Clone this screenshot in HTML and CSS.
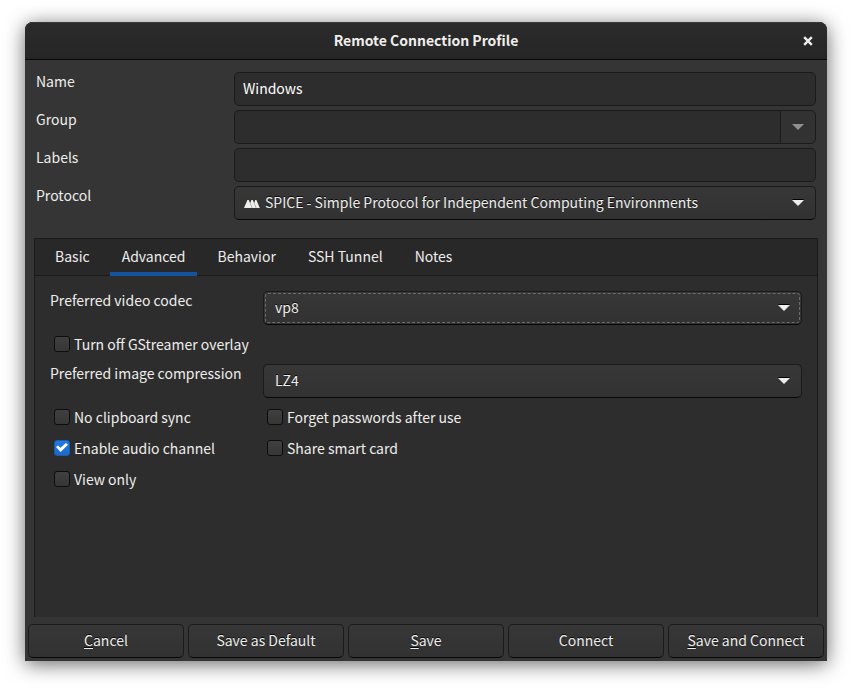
FILE: index.html
```html
<!DOCTYPE html>
<html lang="en">

<head>
    <meta charset="UTF-8">
    <meta name="viewport" content="width=device-width, initial-scale=1.0">
    <title>Remote Connection Profile</title>
    <link rel="stylesheet" href="styles.css">
</head>

<body>
    <main class="window">
        <header class="titlebar">
            <h1>Remote Connection Profile</h1>
            <button class="close" type="button" aria-label="Close">
                <svg width="10" height="10" viewBox="0 0 10 10">
                    <path d="M1.2 1.2 8.8 8.8M8.8 1.2 1.2 8.8" stroke="currentColor" stroke-width="2.4" />
                </svg>
            </button>
        </header>

        <form class="profile">
            <label for="name">Name</label>
            <input class="entry" id="name" type="text" value="Windows">

            <label for="group">Group</label>
            <div class="combo">
                <input class="entry" id="group" type="text">
                <button class="drop" type="button" aria-label="Show groups">
                    <svg width="12" height="6" viewBox="0 0 12 6"><path d="M0 0h12L6 6z" fill="currentColor" /></svg>
                </button>
            </div>

            <label for="labels">Labels</label>
            <input class="entry" id="labels" type="text">

            <label for="protocol">Protocol</label>
            <div class="select with-icon">
                <select id="protocol">
                    <option>SPICE - Simple Protocol for Independent Computing Environments</option>
                </select>
                <svg class="icon" width="16" height="8" viewBox="0 0 16 8" fill="currentColor">
                    <path d="M0 8 3.4 0H4.8L8 8zM6.2 3 7.4 0H8.8L12 8H8.4zM10.2 3 11.2 0H12.4L15.8 8H12.4z" />
                </svg>
                <svg class="arrow" width="12" height="6" viewBox="0 0 12 6"><path d="M0 0h12L6 6z" fill="currentColor" /></svg>
            </div>
        </form>

        <section class="notebook">
            <nav class="tabs" role="tablist">
                <button type="button" role="tab">Basic</button>
                <button class="active" type="button" role="tab" aria-selected="true">Advanced</button>
                <button type="button" role="tab">Behavior</button>
                <button type="button" role="tab">SSH Tunnel</button>
                <button type="button" role="tab">Notes</button>
            </nav>
            <div class="page" role="tabpanel">
                <div class="options">
                    <label for="codec">Preferred video codec</label>
                    <div class="select focused">
                        <select id="codec">
                            <option>vp8</option>
                        </select>
                        <svg class="arrow" width="12" height="6" viewBox="0 0 12 6"><path d="M0 0h12L6 6z" fill="currentColor" /></svg>
                    </div>

                    <label class="check wide"><input type="checkbox">Turn off GStreamer overlay</label>

                    <label for="compression">Preferred image compression</label>
                    <div class="select">
                        <select id="compression">
                            <option>LZ4</option>
                        </select>
                        <svg class="arrow" width="12" height="6" viewBox="0 0 12 6"><path d="M0 0h12L6 6z" fill="currentColor" /></svg>
                    </div>
                </div>
                <div class="options checks">
                    <label class="check"><input type="checkbox">No clipboard sync</label>
                    <label class="check"><input type="checkbox">Forget passwords after use</label>
                    <label class="check"><input type="checkbox" checked>Enable audio channel</label>
                    <label class="check"><input type="checkbox">Share smart card</label>
                    <label class="check"><input type="checkbox">View only</label>
                </div>
            </div>
        </section>

        <footer class="actions">
            <button type="button"><u>C</u>ancel</button>
            <button type="button">Save as Default</button>
            <button type="button"><u>S</u>ave</button>
            <button type="button">Connect</button>
            <button type="button"><u>S</u>ave and Connect</button>
        </footer>
    </main>
</body>

</html>
```

FILE: styles.css
```css
* {
    box-sizing: border-box;
    margin: 0;
    padding: 0;
}

body {
    min-height: 100vh;
    padding: 22px 25px 28px;
    background: #fff;
    display: flex;
    font: 14px/18px "Noto Sans CJK SC", sans-serif;
    color: #eeeeec;
}

button,
input,
select {
    font: inherit;
    color: inherit;
}

svg {
    display: block;
}

.window {
    flex: 1;
    display: flex;
    flex-direction: column;
    background: #353535;
    border-radius: 8px 8px 0 0;
    box-shadow: 0 3px 20px rgba(0, 0, 0, 0.6);
}

/* title bar */
.titlebar {
    position: relative;
    height: 38px;
    display: flex;
    align-items: center;
    justify-content: center;
    background: linear-gradient(#2b2b2b, #262626);
    border-bottom: 1px solid #070707;
    border-radius: 8px 8px 0 0;
    box-shadow: inset 0 1px #383838;
}

.titlebar h1 {
    padding-bottom: 2px;
    font-size: 14px;
    font-weight: bold;
}

.close {
    position: absolute;
    right: 14px;
    background: none;
    border: 0;
}

/* profile fields */
.profile {
    display: grid;
    grid-template-columns: 194px 1fr;
    gap: 4px;
    padding: 12px 11px 18px;
}

.entry {
    width: 100%;
    height: 34px;
    padding: 0 8px 2px;
    background: #2d2d2d;
    border: 1px solid #1b1b1b;
    border-radius: 5px;
    color: #fff;
}

.combo {
    display: flex;
}

.combo .entry {
    flex: 1;
    border-right: 0;
    border-radius: 5px 0 0 5px;
}

.drop {
    width: 36px;
    display: flex;
    align-items: center;
    justify-content: center;
    background: #323232;
    border: 1px solid #1b1b1b;
    border-radius: 0 5px 5px 0;
    color: #919190;
}

.select {
    position: relative;
}

.select select,
.actions button {
    width: 100%;
    height: 34px;
    padding-bottom: 2px;
    background: linear-gradient(#373737, #323232);
    border: 1px solid #1b1b1b;
    border-bottom-color: #070707;
    border-radius: 5px;
    text-shadow: 0 -1px rgba(0, 0, 0, 0.8);
}

.select select {
    appearance: none;
    padding: 0 32px 2px 11px;
    line-height: 26px;
}

.with-icon select {
    padding-left: 30px;
}

.focused select {
    outline: 1px dashed #6c6c6b;
    outline-offset: -3px;
}

.arrow,
.icon {
    position: absolute;
    top: 14px;
    pointer-events: none;
}

.arrow {
    right: 12px;
    filter: drop-shadow(0 -1px #000);
}

.icon {
    left: 10px;
}

/* notebook */
.notebook {
    flex: 1;
    display: flex;
    flex-direction: column;
    margin: 0 9px;
    background: #2d2d2d;
    border: 1px solid #1b1b1b;
    border-bottom: 0;
}

.tabs {
    display: flex;
    gap: 8px;
    height: 37px;
    padding: 0 8px;
    background: #282828;
    box-shadow: inset 0 -1px #1b1b1b;
}

.tabs button {
    padding: 0 12px 4px;
    background: none;
    border: 0;
}

.tabs .active {
    box-shadow: inset 0 -4px #15539e;
}

.page {
    padding: 15px;
}

.options {
    display: grid;
    grid-template-columns: 207px 1fr;
    gap: 6px;
}

.checks {
    margin-top: 6px;
    row-gap: 4px;
}

.check {
    display: flex;
    align-items: center;
    gap: 4px;
    height: 27px;
    padding: 0 0 2px 4px;
}

.wide {
    grid-column: 1 / -1;
}

.check input {
    appearance: none;
    width: 16px;
    height: 16px;
    background: linear-gradient(#404040, #363636);
    border: 1px solid #0d0d0d;
    border-radius: 3px;
}

.check input:checked {
    background: linear-gradient(#2379e2, #1b6acb);
    border-color: #185fb4;
    display: grid;
    place-items: center;
}

.check input:checked::before {
    content: "";
    width: 12px;
    height: 9px;
    background: #fff;
    clip-path: polygon(0 45%, 17% 28%, 38% 54%, 83% 0, 100% 20%, 38% 100%);
}

/* bottom buttons */
.actions {
    display: grid;
    grid-template-columns: repeat(5, 1fr);
    gap: 4px;
    padding: 7px 3px 3px;
}

.actions u {
    text-underline-offset: 2px;
}
```
